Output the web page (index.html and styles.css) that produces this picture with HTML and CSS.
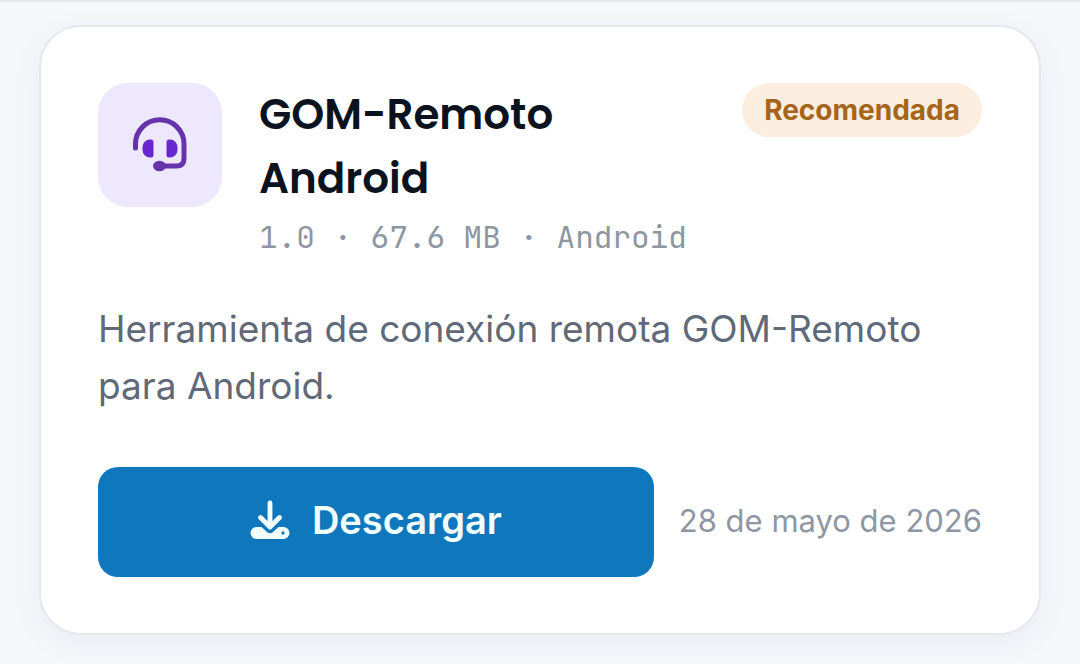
FILE: index.html
```
<!DOCTYPE html>
<html lang="es">
<head>
    <meta charset="UTF-8">
    <meta name="viewport" content="width=device-width, initial-scale=1.0">
    <title>GOM-Remoto Android</title>
    <link rel="stylesheet" href="styles.css">
</head>
<body>
    <main class="downloads">
        <article class="card">
            <header class="card-header">
                <div class="app-icon">
                    <svg viewBox="0 0 60 60" width="60" height="60" aria-hidden="true">
                        <path d="M5.500 33V29A24.250 24.250 0 0 1 54 29V43.500Q54 51 46.500 51H30" fill="none" stroke="#6534ac" stroke-width="5" stroke-linecap="round" stroke-linejoin="round"/>
                        <ellipse cx="29.500" cy="51" rx="6.500" ry="5.200" fill="#6534ac"/>
                        <path d="M20 24.500h1a2.500 2.500 0 0 1 2.500 2.500v13a2.500 2.500 0 0 1-2.500 2.500h-1a7.500 7.500 0 0 1-7.500-7.500v-3a7.500 7.500 0 0 1 7.500-7.500zM40 24.500h-1a2.500 2.500 0 0 0-2.500 2.500v13a2.500 2.500 0 0 0 2.500 2.500h1a7.500 7.500 0 0 0 7.500-7.500v-3a7.500 7.500 0 0 0-7.500-7.500z" fill="#6928cf"/>
                    </svg>
                </div>
                <div class="app-info">
                    <h2 class="app-name">GOM-Remoto Android</h2>
                    <p class="app-meta">1.0 · 67.6 MB · Android</p>
                </div>
                <span class="badge">Recomendada</span>
            </header>

            <p class="description">Herramienta de conexión remota GOM-Remoto para Android.</p>

            <footer class="card-footer">
                <button type="button" class="download-btn">
                    <svg viewBox="0 0 40 40" width="40" height="40" aria-hidden="true">
                        <path d="M20 3v23M10.500 17.500l9.500 9.500 9.500-9.500" fill="none" stroke="currentColor" stroke-width="4.800" stroke-linecap="round" stroke-linejoin="round"/>
                        <path fill="currentColor" fill-rule="evenodd" d="M6.500 27H11.500L17 32Q20 34.500 23 32L28.500 27H33.500a6 6 0 0 1 6 6a6 6 0 0 1-6 6H6.500a6 6 0 0 1-6-6a6 6 0 0 1 6-6zM33 31.300a1.700 1.700 0 1 0 0 3.400a1.700 1.700 0 0 0 0-3.400z"/>
                    </svg>
                    Descargar
                </button>
                <time class="date" datetime="2026-05-28">28 de mayo de 2026</time>
            </footer>
        </article>
    </main>
</body>
</html>
```
FILE: styles.css
```
* {
    box-sizing: border-box;
}

body {
    margin: 0;
    font-family: Inter, "Liberation Sans", sans-serif;
    background: #f5f7fb;
}

.downloads {
    border-top: 2px solid #e6e8ec;
    padding: 23px 39px;
}

.card {
    background: #fff;
    border: 2px solid #e4e9ee;
    border-radius: 42px;
    padding: 56px 57px;
    box-shadow: 0 8px 32px rgba(30, 50, 90, 0.06);
}

.card-header {
    display: flex;
    align-items: flex-start;
    gap: 37px;
}

.app-icon {
    display: flex;
    align-items: center;
    justify-content: center;
    flex-shrink: 0;
    width: 124px;
    height: 124px;
    border-radius: 30px;
    background: #ede8fe;
}

.app-info {
    flex: 1;
    min-width: 0;
}

.app-name {
    margin: 0;
    font-family: Poppins, Inter, sans-serif;
    font-size: 42px;
    font-weight: 600;
    line-height: 64px;
    color: #0b1320;
}

.app-meta {
    margin: 2px 0 0;
    font-family: "JetBrains Mono", "DejaVu Sans Mono", monospace;
    font-size: 31px;
    line-height: 48px;
    color: #8e96a1;
    white-space: nowrap;
}

.badge {
    flex-shrink: 0;
    padding: 0 22px;
    border-radius: 27px;
    background: #fceede;
    color: #a5651c;
    font-size: 28px;
    font-weight: 700;
    line-height: 54px;
}

.description {
    margin: 39px 0 53px;
    font-size: 37px;
    line-height: 57px;
    color: #5f6978;
}

.card-footer {
    display: flex;
    align-items: center;
    gap: 25px;
}

.download-btn {
    display: flex;
    flex: 1;
    align-items: center;
    justify-content: center;
    gap: 22px;
    height: 110px;
    padding: 0 0 4px;
    border: none;
    border-radius: 20px;
    background: #0f78bd;
    color: #f2ffff;
    font-family: inherit;
    font-size: 38px;
    font-weight: 600;
    cursor: pointer;
}

.download-btn:hover {
    background: #0c69a7;
}

.date {
    padding-bottom: 4px;
    font-size: 31px;
    color: #8e96a3;
    white-space: nowrap;
}

@media (max-width: 800px) {
    .card-header,
    .card-footer {
        flex-wrap: wrap;
    }
}
```
